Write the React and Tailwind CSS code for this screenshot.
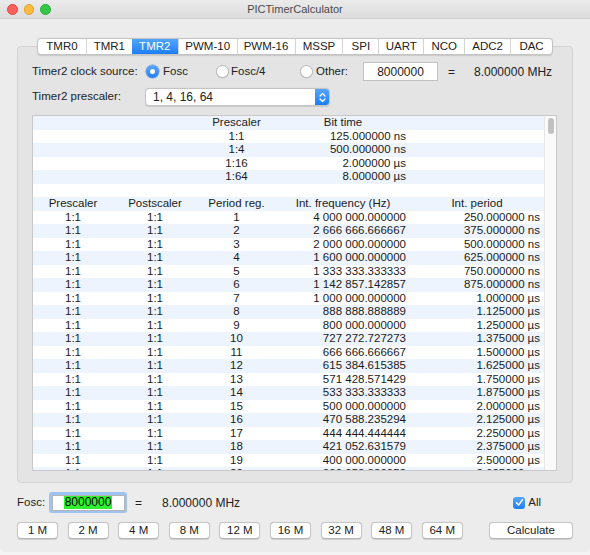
import React from "react";

const TABS = [
  ["TMR0", "w-[48px]"],
  ["TMR1", "w-[46px]"],
  ["TMR2", "w-[46px]"],
  ["PWM-10", "w-[59px]"],
  ["PWM-16", "w-[58px]"],
  ["MSSP", "w-[48px]"],
  ["SPI", "w-[36px]"],
  ["UART", "w-[45px]"],
  ["NCO", "w-[41px]"],
  ["ADC2", "w-[46px]"],
  ["DAC", "w-[42px]"],
];

const FREQ_BUTTONS = ["1 M", "2 M", "4 M", "8 M", "12 M", "16 M", "32 M", "48 M", "64 M"];

const PRESCALE_ROWS = [
  ["1:1", "125.000000 ns"],
  ["1:4", "500.000000 ns"],
  ["1:16", "2.000000 µs"],
  ["1:64", "8.000000 µs"],
];

// 8 MHz Fosc, timer clock Fosc -> int freq = 8e6 / (PR + 1)
function groupDigits(v) {
  const [intPart, frac] = v.toFixed(6).split(".");
  return intPart.replace(/\B(?=(\d{3})+(?!\d))/g, " ") + "." + frac;
}

function periodText(ns) {
  if (ns < 1000) return ns.toFixed(6) + " ns";
  return (ns / 1000).toFixed(6) + " µs";
}

const PERIOD_ROWS = Array.from({ length: 21 }, (_, i) => {
  const pr = i + 1;
  return {
    pr,
    freq: groupDigits(8000000 / (pr + 1)),
    period: periodText((pr + 1) * 125),
  };
});

const COLS = "grid grid-cols-[80px_84px_79px_134px_134px]";

function Row({ index, children }) {
  return (
    <div
      className={`${COLS} h-[13.5px] leading-[13.5px] ${
        index % 2 === 0 ? "bg-[#edf4fe]" : "bg-white"
      }`}
    >
      {children}
    </div>
  );
}

function Radio({ checked }) {
  return checked ? (
    <span className="flex h-[13px] w-[13px] items-center justify-center rounded-full bg-gradient-to-b from-[#5aa9fb] to-[#1d7ff3] shadow-[0_0_0_0.5px_rgba(20,90,200,0.6)]">
      <span className="h-[5px] w-[5px] rounded-full bg-white" />
    </span>
  ) : (
    <span className="h-[13px] w-[13px] rounded-full border border-[#b9b9b9] bg-white shadow-[0_0.5px_1px_rgba(0,0,0,0.15)]" />
  );
}

function MacButton({ label, className }) {
  return (
    <button className={`h-[17px] rounded-[4px] border border-[#c6c6c6] border-b-[#b3b3b3] bg-white text-[11.5px] leading-[15px] text-[#222] shadow-[0_0.5px_1px_rgba(0,0,0,0.12)] ${className}`}>
      {label}
    </button>
  );
}

export default function App() {
  return (
    <div className="h-[555px] w-[590px] bg-[#f4f4f4] font-['Liberation_Sans',Arial,sans-serif] text-[#222]">
      <div className="h-[552px] w-[590px] overflow-hidden rounded-b-[5px] bg-[#ececec]">
        {/* title bar */}
        <div className="relative flex h-[19px] items-center justify-center border-b border-[#d2d2d2] bg-gradient-to-b from-[#ebebeb] to-[#dcdcdc]">
          <div className="absolute left-[7px] top-[4px] flex gap-[6px]">
            <span className="h-[10.5px] w-[10.5px] rounded-full border-[0.5px] border-[#e0443e] bg-[#fc605c]" />
            <span className="h-[10.5px] w-[10.5px] rounded-full border-[0.5px] border-[#dea236] bg-[#fdbc40]" />
            <span className="h-[10.5px] w-[10.5px] rounded-full border-[0.5px] border-[#27aa35] bg-[#34c84a]" />
          </div>
          <span className="text-[11px] text-[#4a4a4a]">PICTimerCalculator</span>
        </div>

        {/* tab strip */}
        <div className="relative z-10 mx-auto mt-[19px] flex h-[17px] w-[516px] overflow-hidden rounded-[4px] border border-[#c4c4c4] bg-white shadow-[0_0.5px_1px_rgba(0,0,0,0.12)]">
          {TABS.map(([name, w], i) => (
            <div
              key={name}
              className={`${w} flex items-center justify-center text-[11.5px] ${
                i > 0 ? "border-l border-[#d4d4d4]" : ""
              } ${
                name === "TMR2"
                  ? "border-l-0 bg-gradient-to-b from-[#51a5fc] to-[#1b7ef4] text-white"
                  : "text-[#222]"
              }`}
            >
              {name}
            </div>
          ))}
        </div>

        {/* group box */}
        <div className="mx-[17px] -mt-[9px] rounded-[4px] border border-[#d3d3d3] bg-[#e4e4e4] pb-[11px] pl-[14px] pr-[15px] pt-[15px]">
          <div className="flex h-[19px] items-center text-[11.5px]">
            <span className="w-[114px]">Timer2 clock source:</span>
            <label className="flex w-[70px] items-center gap-[4px]">
              <Radio checked />
              <span>Fosc</span>
            </label>
            <label className="flex w-[84px] items-center gap-[2px]">
              <Radio />
              <span>Fosc/4</span>
            </label>
            <label className="flex w-[63px] items-center gap-[3px]">
              <Radio />
              <span>Other:</span>
            </label>
            <div className="flex h-[19px] w-[75px] items-center justify-center border border-[#c2c2c2] bg-white text-[12px]">
              8000000
            </div>
            <span className="ml-[10px] text-[12px]">=</span>
            <span className="ml-[19px] text-[12px]">8.000000 MHz</span>
          </div>

          <div className="mt-[7px] flex h-[18px] items-center text-[11.5px]">
            <span className="w-[113px]">Timer2 prescaler:</span>
            <div className="flex h-[18px] w-[185px] overflow-hidden rounded-[4px] border border-[#c4c4c4] bg-white shadow-[0_0.5px_1px_rgba(0,0,0,0.12)]">
              <span className="flex-1 pl-[7px] text-[12px] leading-[16px]">1, 4, 16, 64</span>
              <span className="flex w-[14px] items-center justify-center bg-gradient-to-b from-[#52a6fc] to-[#1b7ef4]">
                <svg width="7" height="11" viewBox="0 0 7 11" fill="none" stroke="white" strokeWidth="1.3" strokeLinecap="round" strokeLinejoin="round">
                  <path d="M1 4 L3.5 1.5 L6 4" />
                  <path d="M1 7 L3.5 9.5 L6 7" />
                </svg>
              </span>
            </div>
          </div>

          {/* table */}
          <div className="mt-[9px] flex h-[356px] border border-[#c9c9c9] bg-white text-[11.5px] text-[#1b1b1b]">
            <div className="h-full w-[511px] overflow-hidden">
              <Row index={0}>
                <span />
                <span />
                <span className="text-center">Prescaler</span>
                <span className="text-center">Bit time</span>
                <span />
              </Row>
              {PRESCALE_ROWS.map(([p, t], i) => (
                <Row key={p} index={i + 1}>
                  <span />
                  <span />
                  <span className="text-center">{p}</span>
                  <span className="pr-[4px] text-right">{t}</span>
                  <span />
                </Row>
              ))}
              <Row index={5}>
                <span />
              </Row>
              <Row index={6}>
                <span className="text-center">Prescaler</span>
                <span className="text-center">Postscaler</span>
                <span className="text-center">Period reg.</span>
                <span className="text-center">Int. frequency (Hz)</span>
                <span className="text-center">Int. period</span>
              </Row>
              {PERIOD_ROWS.map((r, i) => (
                <Row key={r.pr} index={i + 7}>
                  <span className="text-center">1:1</span>
                  <span className="text-center">1:1</span>
                  <span className="text-center">{r.pr}</span>
                  <span className="pr-[4px] text-right">{r.freq}</span>
                  <span className="pr-[4px] text-right">{r.period}</span>
                </Row>
              ))}
            </div>
            <div className="flex w-[12px] justify-center border-l border-[#e6e6e6] bg-[#fafafa] pt-[2px]">
              <span className="h-[16px] w-[6px] rounded-full bg-[#c1c1c1]" />
            </div>
          </div>
        </div>

        {/* Fosc row */}
        <div className="mt-[9px] flex h-[21px] items-center px-[17px]">
          <span className="w-[32px] text-[11.5px]">Fosc:</span>
          <div className="flex h-[21px] w-[78px] rounded-[3px] bg-[#9cc3f2] p-[2.5px]">
            <div className="flex flex-1 items-center justify-center border border-[#b5b5b5] bg-white">
              <span className="bg-[#2ef22e] px-[1px] text-[12px] leading-[13px] text-black">8000000</span>
            </div>
          </div>
          <span className="ml-[8px] text-[12px]">=</span>
          <span className="ml-[20px] text-[12px]">8.000000 MHz</span>
          <label className="ml-auto mr-[32px] flex items-center gap-[3px] text-[11.5px]">
            <span className="flex h-[12px] w-[12px] items-center justify-center rounded-[3px] bg-gradient-to-b from-[#52a6fc] to-[#1b7ef4]">
              <svg width="9" height="9" viewBox="0 0 9 9" fill="none" stroke="white" strokeWidth="1.5" strokeLinecap="round" strokeLinejoin="round">
                <path d="M1.5 4.8 L3.6 7 L7.5 1.8" />
              </svg>
            </span>
            <span>All</span>
          </label>
        </div>

        {/* quick frequency buttons */}
        <div className="mt-[9px] flex px-[17px]">
          <div className="flex gap-[9.6px]">
            {FREQ_BUTTONS.map((b) => (
              <MacButton key={b} label={b} className="w-[41px]" />
            ))}
          </div>
          <MacButton label="Calculate" className="ml-auto w-[84px]" />
        </div>
      </div>
    </div>
  );
}
